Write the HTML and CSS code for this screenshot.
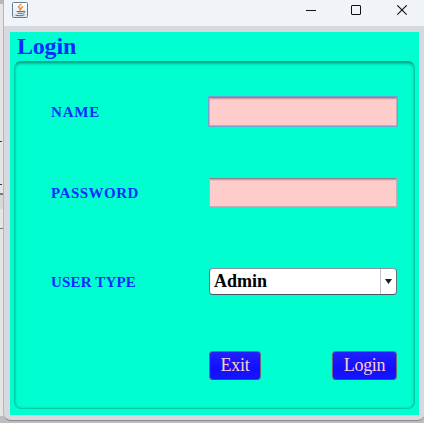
FILE: index.html
```
<!DOCTYPE html>
<html lang="en">
<head>
<meta charset="utf-8">
<title>Login</title>
<link rel="stylesheet" href="styles.css">
</head>
<body>
<main class="window">
  <header class="titlebar">
    <svg class="java" width="16" height="16" viewBox="0 0 16 16">
      <defs><linearGradient id="tile" x2="0" y2="1"><stop stop-color="#fff"/><stop offset="1" stop-color="#dce5ec"/></linearGradient></defs>
      <rect x=".5" y=".5" width="15" height="15" rx="1" fill="url(#tile)" stroke="#627d92"/>
      <path d="M9.500 2C5.500 4.500 6 5 8 6.500Q8.800 7.500 7.500 8.500M11 4.500Q8 6 9.500 7.500" fill="none" stroke="#f08a28" stroke-width="1.400"/>
      <path d="M4.500 9.500H11M5.500 11.300H10.500M3.500 13.300Q8 14.500 12.500 12.800M11 9.300Q14 8.800 12.500 10.500L11 11.200" fill="none" stroke="#53758f"/>
    </svg>
    <svg class="controls" width="104" height="11" viewBox="0 0 104 11" fill="none" stroke="#111">
      <path d="M0 5.500H10"/>
      <rect x="45.500" y=".5" width="9" height="9" rx=".5"/>
      <path d="M91.300 .3L100.700 9.700M100.700 .3L91.300 9.700" stroke-width="1.100"/>
    </svg>
  </header>
  <section class="content">
    <h1 class="heading">Login</h1>
    <form class="panel">
      <div class="row name"><label class="label">NAME</label><div class="field focused"></div></div>
      <div class="row password"><label class="label">PASSWORD</label><div class="field"></div></div>
      <div class="row type"><label class="label">USER TYPE</label>
        <div class="select"><span class="value">Admin</span><span class="arrow"><svg width="7" height="5" viewBox="0 0 7 5"><path d="M0 0H7L3.500 5Z" fill="#1b1b1b"/></svg></span></div>
      </div>
      <div class="actions"><button type="button" class="button exit">Exit</button><button type="button" class="button login">Login</button></div>
    </form>
  </section>
</main>
</body>
</html>
```
FILE: styles.css
```
* { box-sizing: border-box; }
body {
  margin: 0;
  width: 424px;
  height: 423px;
  overflow: hidden;
  padding-left: 3px;
  font-family: "Liberation Serif", serif;
  background:
    linear-gradient(#b8b8b8, #b8b8b8) 0 0 / 4px 4px no-repeat,
    linear-gradient(#25306e, #25306e) 0 141px / 2px 1px no-repeat,
    linear-gradient(#253070, #253070) 0 184px / 2px 1px no-repeat,
    linear-gradient(#777, #777) 0 193px / 4px 2px no-repeat,
    linear-gradient(#d8d8d8, #d8d8d8) 0 195px / 4px 14px no-repeat,
    linear-gradient(#777, #777) 0 228px / 4px 1px no-repeat,
    linear-gradient(#bdbdbd, #bdbdbd) 0 416px / 424px 7px no-repeat,
    #e5e5e5;
}
.window {
  width: 422px;
  height: 421px;
  background: #d6d9df;
  border-left: 1px solid #b5b5b8;
  border-bottom: 1px solid #8c8c8c;
  border-radius: 0 0 8px 8px;
}
.titlebar {
  height: 26px;
  display: flex;
  justify-content: space-between;
  align-items: flex-start;
  padding: 2px 15px 0 8px;
  background: #f0f3f7;
}
.java, .controls { display: block; }
.controls { margin-top: 3px; }
.content {
  margin: 6px 0 0 6px;
  width: 409px;
  height: 383px;
  padding: 0 4px 6px;
  background: #00ffd0;
}
.heading {
  margin: 0;
  height: 29px;
  padding-left: 3px;
  font-size: 24px;
  line-height: 29px;
  letter-spacing: -.2px;
  color: #0a2cff;
}
.panel {
  width: 401px;
  height: 348px;
  padding: 34px 17px 0 36px;
  border: 1px solid #00c9a4;
  border-top: 2px solid #00b090;
  border-radius: 7px;
  box-shadow: inset 0 1px 3px #009f8399, inset 0 0 2px #00a98b66;
}
.row {
  display: grid;
  grid-template-columns: 158px 188px;
  align-items: center;
}
.name { height: 29px; }
.password { height: 29px; margin-top: 52px; }
.type { height: 27px; margin-top: 61px; }
.label {
  padding-top: 1px;
  font-size: 15px;
  line-height: 20px;
  font-weight: bold;
  letter-spacing: .5px;
  color: #0a2cff;
}
.name .label { letter-spacing: .8px; }
.type .label { letter-spacing: .15px; }
.field {
  height: 29px;
  background: #ffcccc;
  border: 1px solid #c4aeb2;
  border-top: 1px solid #8f8289;
  box-shadow: inset 0 1px #c9a3a5, inset 0 2px #edbebf;
}
.focused {
  box-shadow: 0 0 0 1px #73a4d1, inset 0 1px #c9a3a5, inset 0 2px #edbebf;
}
.select {
  display: flex;
  height: 27px;
  border: 1px solid #68727d;
  border-top-color: #8c949d;
  border-bottom-color: #4b5665;
  border-radius: 4px;
  background: #fff;
}
.value {
  flex: 1;
  padding-left: 4px;
  font-size: 18px;
  line-height: 25px;
  font-weight: bold;
  color: #000;
}
.arrow {
  width: 16px;
  display: flex;
  align-items: center;
  justify-content: center;
  border-left: 1px solid #bcc3cc;
}
.actions {
  display: flex;
  justify-content: space-between;
  margin: 56px 0 0 158px;
}
.button {
  height: 29px;
  padding: 0;
  border: 1px solid #6b6680;
  border-bottom-color: #474c58;
  border-radius: 4px;
  font: 18px/27px "Liberation Serif", serif;
  letter-spacing: -.3px;
  color: #ffcccc;
  background: linear-gradient(#2020ff, #1010ff 60%, #1414ff);
}
.exit { width: 52px; }
.login { width: 65px; }
```
